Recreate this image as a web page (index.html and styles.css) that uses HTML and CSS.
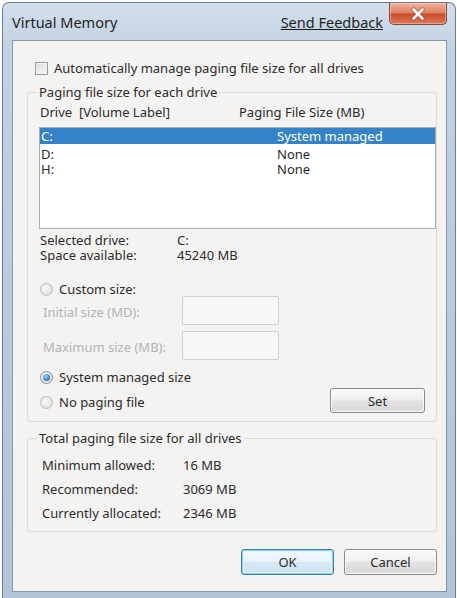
FILE: index.html
```html
<!DOCTYPE html>
<html>
<head>
<meta charset="utf-8">
<link rel="stylesheet" href="styles.css">
</head>
<body>
<div class="window">
  <div class="titlebar">
    <span class="title">Virtual Memory</span>
    <a class="feedback">Send Feedback</a>
    <span class="close">
      <svg width="16" height="14" viewBox="0 0 16 14">
        <path d="M3.5 2.5 L12.5 11.5 M12.5 2.5 L3.5 11.5" stroke="#7a3524" stroke-width="4.2" stroke-linecap="round" fill="none" opacity="0.55"/>
        <path d="M3.5 2.5 L12.5 11.5 M12.5 2.5 L3.5 11.5" stroke="#ffffff" stroke-width="2.6" stroke-linecap="round" fill="none"/>
      </svg>
    </span>
  </div>
  <div class="client">
    <div class="check-row"><span class="checkbox"></span><span>Automatically manage paging file size for all drives</span></div>

    <fieldset class="group group-drives">
      <legend>Paging file size for each drive</legend>
      <div class="list-head"><span class="col-drive">Drive&nbsp; [Volume Label]</span><span>Paging File Size (MB)</span></div>
      <div class="listbox">
        <div class="list-row selected"><span class="col-val">C:</span><span>System managed</span></div>
        <div class="list-row gap"><span class="col-val">D:</span><span>None</span></div>
        <div class="list-row"><span class="col-val">H:</span><span>None</span></div>
      </div>
      <div class="info">
        <span>Selected drive:</span><span>C:</span>
        <span>Space available:</span><span>45240 MB</span>
      </div>
      <div class="radio-row custom"><span class="radio"></span><span>Custom size:</span></div>
      <div class="field-row first"><span class="field-label">Initial size (MD):</span><span class="textbox"></span></div>
      <div class="field-row second"><span class="field-label">Maximum size (MB):</span><span class="textbox"></span></div>
      <div class="radio-row system"><span class="radio checked"></span><span>System managed size</span></div>
      <div class="last-row">
        <div class="radio-row"><span class="radio"></span><span>No paging file</span></div>
        <button class="btn set">Set</button>
      </div>
    </fieldset>

    <fieldset class="group group-total">
      <legend>Total paging file size for all drives</legend>
      <div class="totals">
        <span>Minimum allowed:</span><span>16 MB</span>
        <span>Recommended:</span><span>3069 MB</span>
        <span>Currently allocated:</span><span>2346 MB</span>
      </div>
    </fieldset>

    <div class="buttons">
      <button class="btn ok">OK</button>
      <button class="btn">Cancel</button>
    </div>
  </div>
</div>
</body>
</html>
```

FILE: styles.css
```css
* { box-sizing: border-box; }
html, body { margin: 0; padding: 0; background: #ffffff; }
body {
  font-family: "Noto Sans", "Open Sans", sans-serif;
  font-size: 13px;
  color: #2b2b2b;
}
.window {
  margin: 2px 0 0 2px;
  width: 454px;
  height: 596px;
  border: 1px solid #6d7c95;
  border-bottom: none;
  border-radius: 7px 7px 0 0;
  background: linear-gradient(180deg, #d3deeb 0%, #c2d1e3 8%, #b9c9dc 60%, #b4c4d8 100%);
  display: flex;
  flex-direction: column;
}
.titlebar {
  height: 37px;
  display: flex;
  align-items: flex-start;
  padding-left: 9px;
}
.title {
  margin-top: 9px;
  font-size: 14.5px;
  color: #1e1e1e;
}
.feedback {
  margin-left: auto;
  margin-top: 9px;
  font-size: 14.5px;
  color: #1e1e1e;
  text-decoration: underline;
}
.close {
  margin-left: 6px;
  margin-right: 8px;
  width: 58px;
  height: 22px;
  border: 1px solid #7d4a3e;
  border-top: none;
  border-radius: 0 0 5px 5px;
  background: linear-gradient(180deg, #efb29e 0%, #e08263 45%, #cc4d2d 55%, #db7a5b 100%);
  display: flex;
  align-items: center;
  justify-content: center;
  box-shadow: inset 0 0 0 1px rgba(255,220,200,0.45);
}
.client {
  margin: 0 8px 6px 9px;
  flex: 1;
  border: 1px solid #8696ad;
  background: #f5f3f1;
  display: flex;
  flex-direction: column;
}
.check-row {
  margin-top: 19px;
  padding-left: 22px;
  height: 16px;
  display: flex;
  align-items: center;
  gap: 6px;
}
.checkbox {
  width: 13px;
  height: 13px;
  border: 1px solid #9a9a9a;
  background: linear-gradient(135deg, #dcdcdc, #f6f6f6);
  box-shadow: inset 0 0 0 1px #f2f2f2;
}
.group {
  margin: 0 9px 0 14px;
  border: 1px solid #d9dde2;
  border-radius: 3px;
  padding: 0 0 0 11px;
  min-width: 0;
}
.group legend {
  padding: 0 2px;
  margin-left: -2px;
  line-height: 16px;
}
.group-drives {
  margin-top: 8px;
  padding-bottom: 8px;
}
.list-head {
  margin-top: 4px;
  height: 16px;
  line-height: 16px;
  display: flex;
  padding-left: 1px;
}
.col-drive { width: 199px; }
.listbox {
  margin-top: 7px;
  height: 102px;
  border: 1px solid #a9aeb6;
  background: #ffffff;
}
.list-row {
  display: flex;
  height: 15px;
  line-height: 15px;
  padding-left: 1px;
}
.list-row.selected {
  height: 16px;
  line-height: 16px;
  background: #3483c9;
  color: #ffffff;
}
.list-row.gap { margin-top: 3px; }
.col-val { width: 236px; }
.info {
  margin-top: 4px;
  display: grid;
  grid-template-columns: 137px auto;
  line-height: 15px;
  padding-left: 1px;
}
.radio-row {
  display: flex;
  align-items: center;
  gap: 6px;
  height: 16px;
  padding-left: 1px;
}
.radio-row.custom { margin-top: 18px; }
.radio-row.system { margin-top: 9px; }
.radio {
  width: 13px;
  height: 13px;
  border-radius: 50%;
  border: 1px solid #b9b9b9;
  background: radial-gradient(circle at 40% 40%, #f8f8f8 0%, #e2e2e2 70%, #d4d4d4 100%);
  display: flex;
  align-items: center;
  justify-content: center;
}
.radio.checked {
  border-color: #8c8c8c;
}
.radio.checked::after {
  content: "";
  width: 7px;
  height: 7px;
  border-radius: 50%;
  background: radial-gradient(circle at 40% 35%, #a9d4f5 0%, #3b87cf 55%, #1f5f9e 100%);
}
.field-row {
  display: flex;
  align-items: center;
  padding-left: 4px;
  color: #b2b2b2;
}
.field-row.first { margin-top: -1px; }
.field-row.second { margin-top: 6px; }
.field-label { width: 139px; padding-top: 3px; }
.textbox {
  width: 97px;
  height: 29px;
  border: 1px solid #cfcfcf;
  background: #f8f7f5;
  border-radius: 1px;
}
.last-row {
  margin-top: 3px;
  display: flex;
  align-items: center;
  justify-content: space-between;
  padding-right: 11px;
}
.last-row .radio-row { padding-top: 3px; }
.btn {
  font-family: inherit;
  font-size: 13px;
  color: #2b2b2b;
  border: 1px solid #8a8a8a;
  border-radius: 3px;
  background: linear-gradient(180deg, #fafafa 0%, #eeeeee 48%, #e2e2e2 52%, #d9d9d9 100%);
  box-shadow: inset 0 0 0 1px #fbfbfb;
  padding: 0;
}
.btn.set { width: 95px; height: 25px; }
.group-total {
  margin-top: 8px;
  padding-bottom: 6px;
}
.totals {
  margin-top: 7px;
  display: grid;
  grid-template-columns: 141px auto;
  grid-auto-rows: 24px;
  align-items: center;
  padding-left: 3px;
}
.buttons {
  margin-top: 17px;
  display: flex;
  justify-content: flex-end;
  gap: 10px;
  padding-right: 9px;
}
.buttons .btn { width: 93px; height: 26px; }
.btn.ok {
  border-color: #3c7fb1;
  box-shadow: inset 0 0 0 1px #8fd0f2, inset 0 0 0 2px #e4f4fc;
  background: linear-gradient(180deg, #f4fafd 0%, #e6f2f9 48%, #d6e8f4 52%, #cfe3f1 100%);
}
```
